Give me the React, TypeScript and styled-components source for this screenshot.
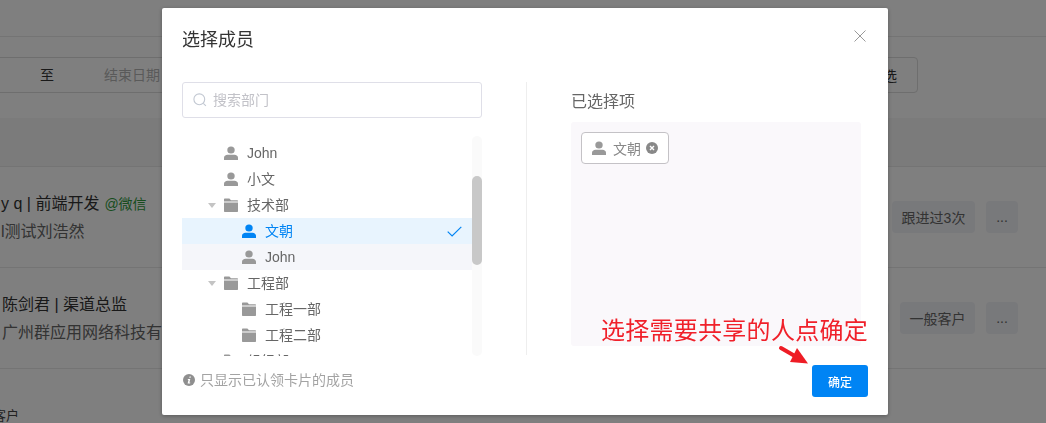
import React from 'react';
import styled, { createGlobalStyle } from 'styled-components';

const GlobalStyle = createGlobalStyle`
  html, body {
    margin: 0;
    padding: 0;
    height: 100%;
    overflow: hidden;
    background: #fff;
    font-family: "Liberation Sans", "Noto Sans CJK SC", sans-serif;
  }
  * { box-sizing: border-box; }
`;

// Page behind the dialog
const Page = styled.div`
  width: 1046px;
  height: 423px;
  overflow: hidden;
  color: #333;
  font-size: 14px;
`;

const TopBar = styled.div`
  height: 37px;
  border-bottom: 1px solid #e9e9e9;
`;

const FilterBar = styled.div`
  display: flex;
  align-items: stretch;
  padding: 20px 128px 0 0;
  height: 81px;
`;

const DateRange = styled.div`
  flex: 1;
  height: 36px;
  display: flex;
  align-items: center;
  border-top: 1px solid #dcdcdc;
  border-bottom: 1px solid #dcdcdc;
  font-size: 14px;
  padding: 0 0 2px 40px;
`;

const DateEnd = styled.span`
  margin-left: 50px;
  color: #b5b5b5;
`;

const FilterButton = styled.div`
  width: 70px;
  height: 36px;
  border: 1px solid #dcdcdc;
  border-radius: 4px;
  display: flex;
  align-items: center;
  justify-content: flex-end;
  padding-right: 20px;
  font-size: 14px;
`;

const TableHead = styled.div`
  height: 49px;
  background: #f7f7f7;
  border-bottom: 1px solid #e9e9e9;
`;

const Row = styled.div`
  height: 101px;
  border-bottom: 1px solid #e9e9e9;
  display: flex;
  justify-content: space-between;
  align-items: center;
  padding-right: 28px;
`;

const RowInfo = styled.div<{ $left: number }>`
  padding: 2px 0 0 ${(p) => p.$left}px;
  display: flex;
  flex-direction: column;
  gap: 8px;
`;

const RowName = styled.div`
  line-height: 20px;
  color: #333;
  font-size: 16px;
`;

const Channel = styled.span`
  color: #2f9a3c;
  font-size: 14px;
  margin-left: 5px;
`;

const RowCompany = styled.div`
  line-height: 20px;
  color: #666;
  font-size: 16px;
`;

const RowActions = styled.div`
  display: flex;
  gap: 11px;
`;

const Tag = styled.div<{ $width: number }>`
  width: ${(p) => p.$width}px;
  height: 32px;
  border-radius: 4px;
  background: #f1f2f6;
  color: #666;
  font-size: 14px;
  display: flex;
  align-items: center;
  justify-content: center;
`;

const ClippedRow = styled.div`
  margin-left: -7px;
  padding-top: 38px;
  font-size: 13px;
  line-height: 18px;
  color: #444;
`;

// Dialog layer
const Mask = styled.div`
  position: fixed;
  inset: 0;
  background: rgba(0, 0, 0, 0.5);
`;

const Dialog = styled.div`
  position: fixed;
  left: 162px;
  top: 8px;
  width: 726px;
  height: 407px;
  background: #fff;
  border-radius: 2px;
  box-shadow: 0 1px 4px rgba(0, 0, 0, 0.3);
  padding: 0 20px;
  display: flex;
  flex-direction: column;
`;

const DialogHeader = styled.div`
  height: 74px;
  display: flex;
  justify-content: space-between;
  padding-top: 18px;
`;

const Title = styled.div`
  font-size: 18px;
  line-height: 26px;
  padding-top: 1px;
  color: #333;
`;

const CloseIcon = styled.svg`
  width: 12px;
  height: 12px;
  margin: 4px 2px 0 0;
`;

const DialogBody = styled.div`
  display: flex;
  height: 273px;
`;

const LeftPane = styled.div`
  width: 345px;
  padding-right: 44px;
  border-right: 1px solid #eee;
`;

const SearchBox = styled.div`
  width: 300px;
  height: 36px;
  border: 1px solid #dfdfe8;
  border-radius: 3px;
  display: flex;
  align-items: center;
  gap: 6px;
  padding-left: 10px;
  font-size: 14px;
  color: #c2c2c8;
`;

const SearchText = styled.span`
  padding-bottom: 2px;
`;

const SearchIcon = styled.svg`
  width: 14px;
  height: 14px;
`;

const TreeWrap = styled.div`
  display: flex;
  width: 300px;
  height: 220px;
  margin-top: 18px;
  overflow: hidden;
`;

const TreeList = styled.div`
  width: 290px;
  padding-top: 4px;
`;

const TreeRow = styled.div<{ $depth: number; $state?: 'active' | 'hover' }>`
  height: 26px;
  display: flex;
  align-items: center;
  padding-left: ${(p) => 24 + p.$depth * 18}px;
  padding-right: 10px;
  font-size: 14px;
  color: ${(p) => (p.$state === 'active' ? '#0084f4' : '#666')};
  background: ${(p) =>
    p.$state === 'active' ? '#e8f4fe' : p.$state === 'hover' ? '#f5f6fa' : 'transparent'};
`;

const Caret = styled.span`
  width: 0;
  height: 0;
  margin-left: -16px;
  margin-right: 8px;
  border-left: 4px solid transparent;
  border-right: 4px solid transparent;
  border-top: 5px solid #c4c4c4;
`;

const NodeIcon = styled.svg<{ $active?: boolean }>`
  width: 14px;
  height: 14px;
  flex: none;
  margin-right: 9px;
  fill: ${(p) => (p.$active ? '#0084f4' : '#999')};
`;

// Chinese labels sit a pixel higher than the latin ones
const NodeLabel = styled.span<{ $cjk?: boolean }>`
  flex: 1;
  padding-bottom: ${(p) => (p.$cjk ? 2 : 0)}px;
`;

const CheckIcon = styled.svg`
  width: 15px;
  height: 11px;
`;

const Track = styled.div`
  width: 10px;
  height: 100%;
  background: #fafafa;
  border-radius: 5px;
  padding-top: 40px;
`;

const Thumb = styled.div`
  height: 89px;
  background: #c8c8c8;
  border-radius: 5px;
`;

const RightPane = styled.div`
  flex: 1;
  padding-left: 44px;
`;

const PaneTitle = styled.div`
  font-size: 16px;
  line-height: 22px;
  height: 40px;
  padding-top: 9px;
  color: #666;
`;

const SelectedBox = styled.div`
  width: 290px;
  height: 224px;
  background: #faf8fb;
  border-radius: 3px;
  padding: 10px;
`;

const SelectedTag = styled.div`
  width: 88px;
  height: 32px;
  background: #fff;
  border: 1px solid #c4c2c6;
  border-radius: 4px;
  display: flex;
  align-items: center;
  padding-left: 10px;
  font-size: 14px;
  color: #888;

  ${NodeIcon} {
    margin-right: 7px;
  }
`;

const TagRemove = styled.svg`
  width: 12px;
  height: 12px;
  margin-left: 5px;
`;

const DialogFooter = styled.div`
  flex: 1;
  display: flex;
  justify-content: space-between;
  padding-top: 10px;
`;

const Hint = styled.div`
  display: flex;
  align-items: center;
  gap: 5px;
  height: 28px;
  margin-left: 1px;
  font-size: 14px;
  color: #a3a3a3;
`;

const InfoIcon = styled.svg`
  width: 12px;
  height: 12px;
  margin-top: 2px;
`;

const ConfirmButton = styled.button`
  width: 56px;
  height: 32px;
  border: none;
  border-radius: 3px;
  background: #0084f4;
  color: #fff;
  font-family: inherit;
  font-size: 12px;
  font-weight: 500;
  padding: 0;
`;

// Red note painted on top of the screenshot
const Note = styled.div`
  position: fixed;
  left: 601px;
  top: 315px;
  font-size: 24px;
  letter-spacing: 0.27px;
  line-height: 32px;
  color: #f0202a;
  white-space: nowrap;
`;

const NoteArrow = styled.svg`
  position: fixed;
  left: 776px;
  top: 343px;
  width: 36px;
  height: 24px;
`;

const Person = ({ active }: { active?: boolean }) => (
  <NodeIcon $active={active} viewBox="0 0 14 14">
    <ellipse cx="7" cy="4" rx="3.7" ry="3.5" />
    <path d="M0 14v-2.4C0 10 1.5 9 3.5 8.8h7c2 .2 3.5 1.2 3.5 2.8V14z" />
  </NodeIcon>
);

const Folder = () => (
  <NodeIcon viewBox="0 0 14 14">
    <path d="M0 1.2C0 .8.3.5.7.5h4.7L7 2.3h6.3c.4 0 .7.3.7.7v.6H0z" />
    <path d="M0 4.4h14v8.9c0 .4-.3.7-.7.7H.7c-.4 0-.7-.3-.7-.7z" />
  </NodeIcon>
);

const App: React.FC = () => {
  return (
    <>
      <GlobalStyle />
      <Page>
        <TopBar />
        <FilterBar>
          <DateRange>
            至<DateEnd>结束日期</DateEnd>
          </DateRange>
          <FilterButton>筛选</FilterButton>
        </FilterBar>
        <TableHead />
        <Row>
          <RowInfo $left={1}>
            <RowName>
              y q | 前端开发<Channel>@微信</Channel>
            </RowName>
            <RowCompany>l测试刘浩然</RowCompany>
          </RowInfo>
          <RowActions>
            <Tag $width={83}>跟进过3次</Tag>
            <Tag $width={32}>...</Tag>
          </RowActions>
        </Row>
        <Row>
          <RowInfo $left={2}>
            <RowName>陈剑君 | 渠道总监</RowName>
            <RowCompany>广州群应用网络科技有</RowCompany>
          </RowInfo>
          <RowActions>
            <Tag $width={60}>已跟进</Tag>
            <Tag $width={75}>一般客户</Tag>
            <Tag $width={32}>...</Tag>
          </RowActions>
        </Row>
        <ClippedRow>客户</ClippedRow>
      </Page>

      <Mask />

      <Dialog>
        <DialogHeader>
          <Title>选择成员</Title>
          <CloseIcon viewBox="0 0 12 12">
            <path d="M.5.5l11 11M11.5.5l-11 11" stroke="#999" strokeWidth="1" fill="none" />
          </CloseIcon>
        </DialogHeader>
        <DialogBody>
          <LeftPane>
            <SearchBox>
              <SearchIcon viewBox="0 0 14 14">
                <circle cx="6.3" cy="6.3" r="5.4" stroke="#c2c8d2" strokeWidth="1.1" fill="none" />
                <path d="M10.3 10.3l2.6 2.6" stroke="#c2c8d2" strokeWidth="1.1" />
              </SearchIcon>
              <SearchText>搜索部门</SearchText>
            </SearchBox>
            <TreeWrap>
              <TreeList>
                <TreeRow $depth={1}>
                  <Person />
                  <NodeLabel>John</NodeLabel>
                </TreeRow>
                <TreeRow $depth={1}>
                  <Person />
                  <NodeLabel $cjk>小文</NodeLabel>
                </TreeRow>
                <TreeRow $depth={1}>
                  <Caret />
                  <Folder />
                  <NodeLabel $cjk>技术部</NodeLabel>
                </TreeRow>
                <TreeRow $depth={2} $state="active">
                  <Person active />
                  <NodeLabel $cjk>文朝</NodeLabel>
                  <CheckIcon viewBox="0 0 15 11">
                    <path d="M.7 5.6l4.4 4.4L14.3.8" stroke="#0084f4" strokeWidth="1.2" fill="none" />
                  </CheckIcon>
                </TreeRow>
                <TreeRow $depth={2} $state="hover">
                  <Person />
                  <NodeLabel>John</NodeLabel>
                </TreeRow>
                <TreeRow $depth={1}>
                  <Caret />
                  <Folder />
                  <NodeLabel $cjk>工程部</NodeLabel>
                </TreeRow>
                <TreeRow $depth={2}>
                  <Folder />
                  <NodeLabel $cjk>工程一部</NodeLabel>
                </TreeRow>
                <TreeRow $depth={2}>
                  <Folder />
                  <NodeLabel $cjk>工程二部</NodeLabel>
                </TreeRow>
                <TreeRow $depth={1}>
                  <Folder />
                  <NodeLabel $cjk>组织部</NodeLabel>
                </TreeRow>
              </TreeList>
              <Track>
                <Thumb />
              </Track>
            </TreeWrap>
          </LeftPane>
          <RightPane>
            <PaneTitle>已选择项</PaneTitle>
            <SelectedBox>
              <SelectedTag>
                <Person />
                文朝
                <TagRemove viewBox="0 0 12 12">
                  <circle cx="6" cy="6" r="6" fill="#888" />
                  <path d="M4 4l4 4M8 4l-4 4" stroke="#fff" strokeWidth="1.4" />
                </TagRemove>
              </SelectedTag>
            </SelectedBox>
          </RightPane>
        </DialogBody>
        <DialogFooter>
          <Hint>
            <InfoIcon viewBox="0 0 12 12">
              <circle cx="6" cy="6" r="6" fill="#8f8f8f" />
              <path d="M6.6 2.4h1.3l-.3 1.3H6.3zM5 5h2.3l-.9 3.6h.9l-.2.9H4.6l.9-3.6h-.8z" fill="#fff" />
            </InfoIcon>
            只显示已认领卡片的成员
          </Hint>
          <ConfirmButton>确定</ConfirmButton>
        </DialogFooter>
      </Dialog>

      <Note>选择需要共享的人点确定</Note>
      <NoteArrow viewBox="0 0 36 24">
        <path d="M5 5l13 7.5" stroke="#ee1c25" strokeWidth="4" strokeLinecap="round" />
        <path d="M32 20.5L14 19l7-14z" fill="#ee1c25" />
      </NoteArrow>
    </>
  );
};

export default App;
